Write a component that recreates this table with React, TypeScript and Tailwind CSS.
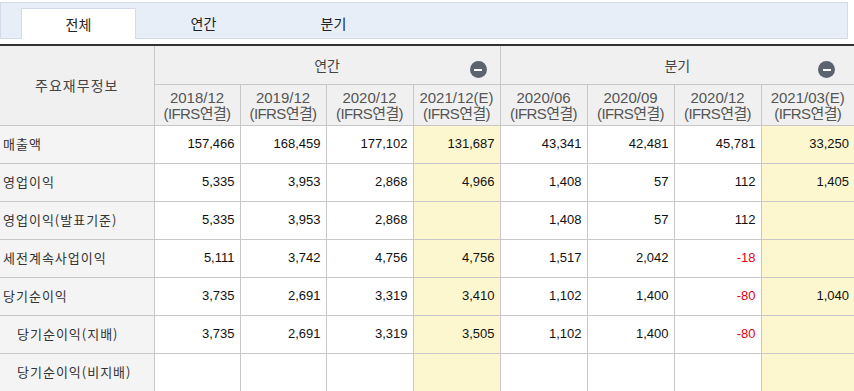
import React from "react";

const kr = "font-['Noto_Sans_CJK_KR',sans-serif]";
const num = "font-['Liberation_Sans','Noto_Sans_CJK_KR',sans-serif]";

const cols = [
  { d: "2018/12", est: false },
  { d: "2019/12", est: false },
  { d: "2020/12", est: false },
  { d: "2021/12(E)", est: true },
  { d: "2020/06", est: false },
  { d: "2020/09", est: false },
  { d: "2020/12", est: false },
  { d: "2021/03(E)", est: true },
];

const rows: { label: string; sub?: boolean; vals: string[] }[] = [
  { label: "매출액", vals: ["157,466", "168,459", "177,102", "131,687", "43,341", "42,481", "45,781", "33,250"] },
  { label: "영업이익", vals: ["5,335", "3,953", "2,868", "4,966", "1,408", "57", "112", "1,405"] },
  { label: "영업이익(발표기준)", vals: ["5,335", "3,953", "2,868", "", "1,408", "57", "112", ""] },
  { label: "세전계속사업이익", vals: ["5,111", "3,742", "4,756", "4,756", "1,517", "2,042", "-18", ""] },
  { label: "당기순이익", vals: ["3,735", "2,691", "3,319", "3,410", "1,102", "1,400", "-80", "1,040"] },
  { label: "당기순이익(지배)", sub: true, vals: ["3,735", "2,691", "3,319", "3,505", "1,102", "1,400", "-80", ""] },
  { label: "당기순이익(비지배)", sub: true, vals: ["", "", "", "", "", "", "", ""] },
];

const MinusIcon = () => (
  <span className="flex h-[17px] w-[17px] items-center justify-center rounded-full bg-[#5b636e]">
    <span className="h-[2px] w-[8px] bg-white" />
  </span>
);

const App = () => {
  return (
    <div className={`w-[854px] h-[391px] overflow-hidden bg-white ${kr}`}>
      {/* 탭 */}
      <div className="mt-[2px] flex h-[37px] w-[848px] items-end border border-[#d3dbea] bg-[#e8eef8]">
        <div className="ml-[20px] -mb-px flex h-[31px] w-[115px] items-center justify-center border border-b-0 border-[#d3dbea] bg-white text-[14px] text-[#222]">
          전체
        </div>
        <div className="ml-[10px] flex h-[30px] w-[115px] items-center justify-center text-[14px] text-[#222]">
          연간
        </div>
        <div className="ml-[15px] flex h-[30px] w-[115px] items-center justify-center text-[14px] text-[#222]">
          분기
        </div>
      </div>

      <table className="mt-[5px] w-[854px] table-fixed border-collapse border-t-2 border-[#333]">
        <colgroup>
          <col className="w-[154px]" />
          <col className="w-[86px]" />
          <col className="w-[86px]" />
          <col className="w-[87px]" />
          <col className="w-[87px]" />
          <col className="w-[87px]" />
          <col className="w-[87px]" />
          <col className="w-[87px]" />
          <col />
        </colgroup>
        <thead>
          <tr className="h-[39px]">
            <th
              rowSpan={2}
              className="border-r border-b border-[#c8c8c8] bg-[#f0f0f0] text-[14px] font-normal tracking-[1px] text-[#444]"
            >
              주요재무정보
            </th>
            <th colSpan={4} className="relative border-r border-b border-[#c8c8c8] bg-[#f0f0f0] pt-[2px] text-[14px] font-normal text-[#444]">
              연간
              <span className="absolute right-[13px] top-[15px]">
                <MinusIcon />
              </span>
            </th>
            <th colSpan={4} className="relative border-b border-[#c8c8c8] bg-[#f0f0f0] pt-[2px] text-[14px] font-normal text-[#444]">
              분기
              <span className="absolute right-[19px] top-[15px]">
                <MinusIcon />
              </span>
            </th>
          </tr>
          <tr className="h-[41px]">
            {cols.map((c, i) => (
              <th
                key={i}
                className={`border-b border-[#c8c8c8] bg-[#f0f0f0] pt-[2px] text-[15px] font-normal leading-[16px] text-[#555] ${num} ${
                  i < 7 ? "border-r" : ""
                }`}
              >
                <div>{c.d}</div>
                <div className="tracking-[-0.6px]">(IFRS연결)</div>
              </th>
            ))}
          </tr>
        </thead>
        <tbody>
          {rows.map((r) => (
            <tr key={r.label} className="h-[38px]">
              <td
                className={`border-r border-b border-[#c8c8c8] bg-[#f4f4f4] text-[13px] tracking-[1px] text-[#333] ${
                  r.sub ? "pl-[17px]" : "pl-[3px]"
                }`}
              >
                {r.label}
              </td>
              {r.vals.map((v, i) => (
                <td
                  key={i}
                  className={`border-b border-[#c8c8c8] pr-[5px] text-right text-[13px] ${num} ${
                    i < 7 ? "border-r" : ""
                  } ${cols[i].est ? "bg-[#fdf7d0]" : "bg-white"} ${
                    v.startsWith("-") ? "text-[#e60012]" : "text-[#111]"
                  }`}
                >
                  {v}
                </td>
              ))}
            </tr>
          ))}
        </tbody>
      </table>
    </div>
  );
};

export default App;
